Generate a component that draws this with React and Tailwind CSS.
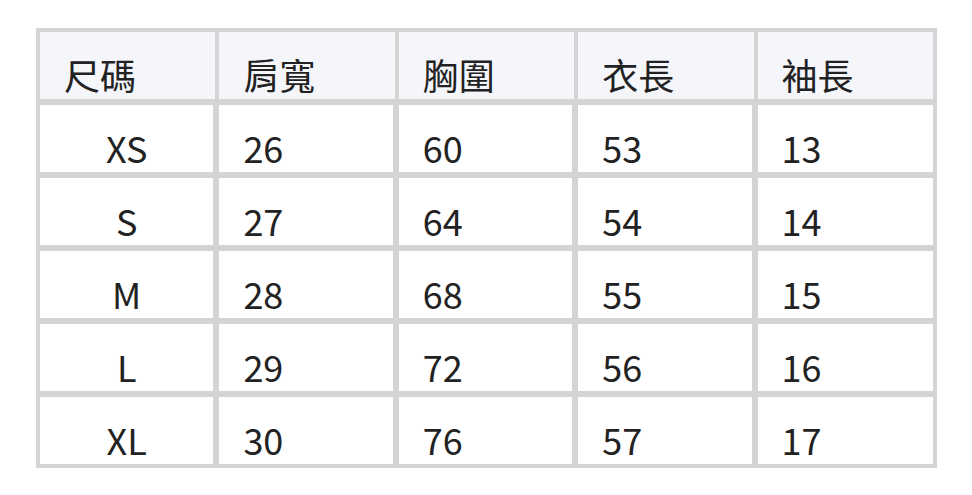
import React from "react";

const headers = ["尺碼", "肩寬", "胸圍", "衣長", "袖長"];
const rows = [
  ["XS", "26", "60", "53", "13"],
  ["S", "27", "64", "54", "14"],
  ["M", "28", "68", "55", "15"],
  ["L", "29", "72", "56", "16"],
  ["XL", "30", "76", "57", "17"],
];

export default function App() {
  return (
    <div
      className="w-[972px] h-[495px] bg-white pt-[28px] pl-[36px]"
      style={{ fontFamily: '"Noto Sans CJK TC", "Noto Sans", sans-serif' }}
    >
      <div className="w-[901px] bg-[#d4d4d4] p-1 flex flex-col gap-[6px] text-[36px] leading-[36px] text-[#222222]">
        <div className="grid grid-cols-5 gap-x-1">
          {headers.map((h) => (
            <div
              key={h}
              className="h-[67px] bg-[#f5f6fa] flex items-end pl-6 pb-[7px]"
            >
              {h}
            </div>
          ))}
        </div>
        {rows.map((r) => (
          <div key={r[0]} className="grid grid-cols-5 gap-x-1">
            {r.map((c, i) => (
              <div
                key={i}
                className={
                  i === 0
                    ? "h-[67px] mr-[2px] bg-white flex items-end justify-center pb-[7px]"
                    : i === 4
                    ? "h-[67px] bg-white flex items-end pl-6 pb-[7px]"
                    : "h-[67px] mr-[2px] bg-white flex items-end pl-6 pb-[7px]"
                }
              >
                {c}
              </div>
            ))}
          </div>
        ))}
      </div>
    </div>
  );
}
